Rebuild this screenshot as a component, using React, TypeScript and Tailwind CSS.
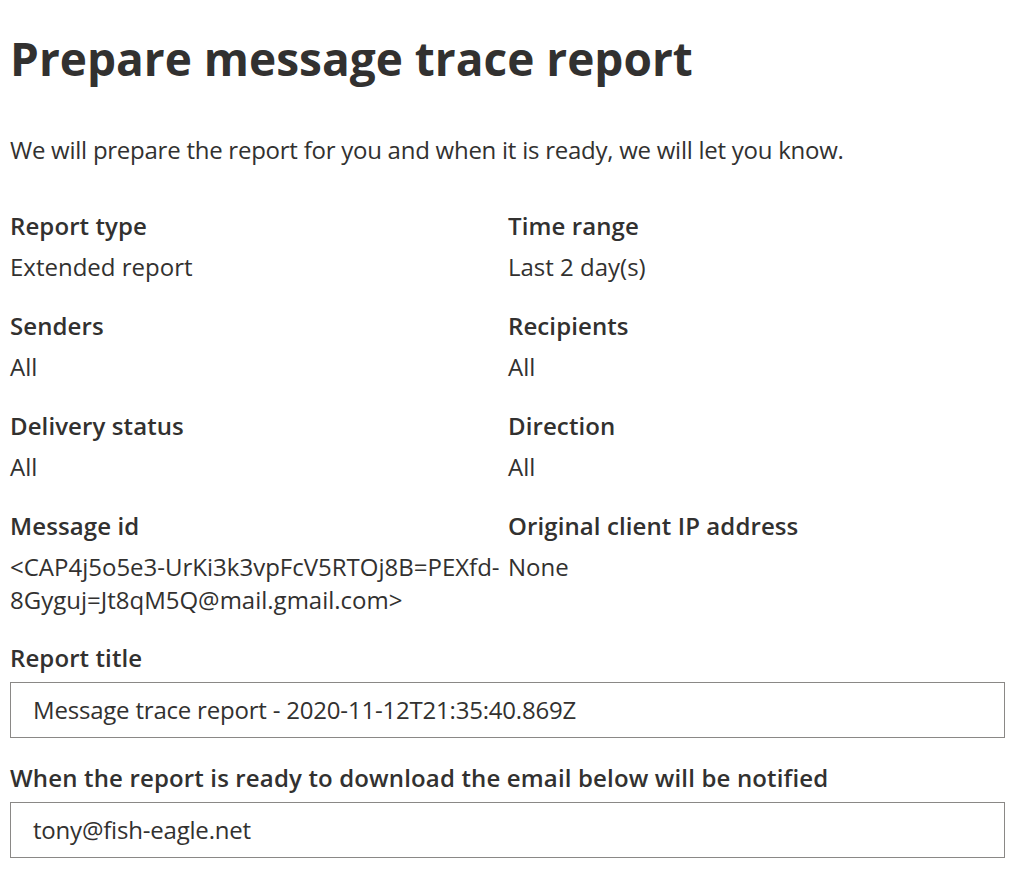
import React from "react";

const fields: [string, string[], string, string[]][] = [
  ["Report type", ["Extended report"], "Time range", ["Last 2 day(s)"]],
  ["Senders", ["All"], "Recipients", ["All"]],
  ["Delivery status", ["All"], "Direction", ["All"]],
  [
    "Message id",
    ["<CAP4j5o5e3-UrKi3k3vpFcV5RTOj8B=PEXfd-", "8Gyguj=Jt8qM5Q@mail.gmail.com>"],
    "Original client IP address",
    ["None"],
  ],
];

export default function App() {
  return (
    <div
      className="w-[1024px] h-[890px] bg-white text-[#323130] pl-[10px] pr-[19px] overflow-hidden"
      style={{ fontFamily: '"Open Sans", "Noto Sans", sans-serif' }}
    >
      <h1 className="text-[46px] font-bold leading-[60px] pt-[28px]">
        Prepare message trace report
      </h1>
      <p className="text-[24px] leading-[33px] mt-[45px] tracking-[-0.25px]">
        We will prepare the report for you and when it is ready, we will let you know.
      </p>
      <div className="mt-[43px] flex flex-col gap-[26px]">
        {fields.map(([l1, v1, l2, v2]) => (
          <div key={l1} className="grid grid-cols-[498px_1fr]">
            <div>
              <div className="text-[24px] font-semibold leading-[33px] tracking-[0.1px]">{l1}</div>
              <div className="mt-[8px] text-[24px] leading-[33px]">
                {v1.map((v) => (
                  <div key={v}>{v}</div>
                ))}
              </div>
            </div>
            <div>
              <div className="text-[24px] font-semibold leading-[33px] tracking-[0.1px]">{l2}</div>
              <div className="mt-[8px] text-[24px] leading-[33px]">
                {v2.map((v) => (
                  <div key={v}>{v}</div>
                ))}
              </div>
            </div>
          </div>
        ))}
      </div>
      <div className="mt-[25px]">
        <div className="text-[24px] font-semibold leading-[33px] tracking-[0.1px]">Report title</div>
        <div className="mt-[8px] h-[56px] border border-[#8a8886] flex items-center pl-[22px] text-[24px] tracking-[-0.2px]">
          Message trace report - 2020-11-12T21:35:40.869Z
        </div>
      </div>
      <div className="mt-[23px]">
        <div className="text-[24px] font-semibold leading-[33px] tracking-[0.15px]">
          When the report is ready to download the email below will be notified
        </div>
        <div className="mt-[8px] h-[56px] border border-[#8a8886] flex items-center pl-[22px] text-[24px] tracking-[-0.2px]">
          tony@fish-eagle.net
        </div>
      </div>
    </div>
  );
}
